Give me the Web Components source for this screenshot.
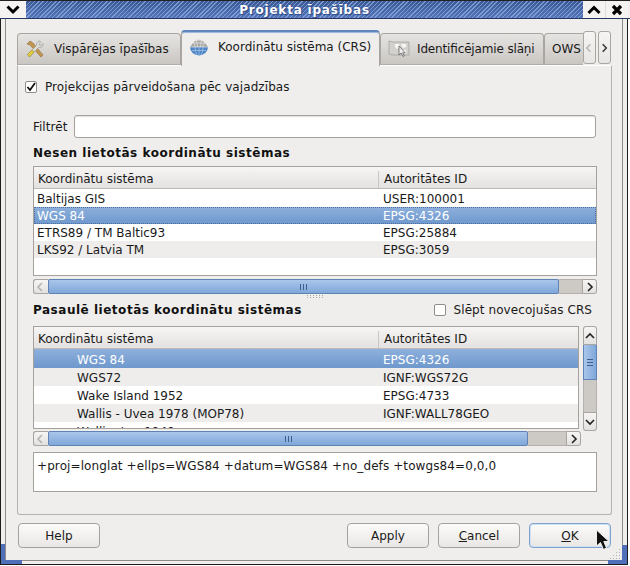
<!DOCTYPE html>
<html>
<head>
<meta charset="utf-8">
<title>Projekta īpašības</title>
<style>
  html, body { margin: 0; padding: 0; background: #fff; }
  body { font-family: "DejaVu Sans", sans-serif; font-size: 12px; color: #1a1a1a; overflow: hidden; }
</style>
</head>
<body>
<props-window>
  <win-titlebar slot="title">Projekta īpašības</win-titlebar>
  <tab-bar slot="tabs">
    <tab-item>
      <svg slot="icon" width="20" height="20" viewBox="0 0 20 20">
        <path d="M5 2 L8 4 L18 16 L16 18 L5 6 L2 5 Z" fill="#c39650" stroke="#8a6a38" stroke-width=".6"/>
        <path d="M15 2 a3.5 3.5 0 0 0 -3.5 4.5 L2.5 15.5 L4.5 18 L13.5 8.5 a3.5 3.5 0 0 0 4.5 -4 L16 6.5 L14 5.5 L15.5 3 Z" fill="#dcdcd8" stroke="#94948e" stroke-width=".6"/>
        <path d="M2.5 15.5 L7 11 L9 13 L4.5 18 Z" fill="#e6cf3f" stroke="#9b8a20" stroke-width=".6"/>
      </svg>
      Vispārējas īpašības
    </tab-item>
    <tab-item active>
      <svg slot="icon" width="20" height="20" viewBox="0 0 20 20">
        <path d="M1 10 a9 8.5 0 0 0 18 0 Z" fill="#4f86c6"/>
        <path d="M2 8.5 Q10 -3 18 8.5 L19 10 L1 10 Z" fill="#a5a5a2"/>
        <path d="M1 10 H19 M4 4.5 L6.5 10 M7.5 2 L8.5 10 M12.5 2 L11.5 10 M16 4.5 L13.5 10 M4 6 H16 M6.5 3.2 H13.5" stroke="#e8e8e6" stroke-width=".7" fill="none"/>
        <path d="M3 13.5 H17 M6 10 Q6 15 8 18 M14 10 Q14 15 12 18 M10 10 V18.5" stroke="#a9c8ea" stroke-width=".7" fill="none"/>
      </svg>
      Koordinātu sistēma (CRS)
    </tab-item>
    <tab-item style="gap: 7px">
      <svg slot="icon" width="22" height="20" viewBox="0 0 22 20" style="margin-top:-2px">
        <path d="M1 3 L5 4 H21 V17 H5 L1 16 Z" fill="#d2d1ce" stroke="#a3a29e" stroke-width=".8"/>
        <path d="M7 6 H11 L12 9 L9 11 L7 9 Z M13 6 H18 V9 L15 10 Z M15 12 H18 V15 H15 Z" fill="#f6f6f4"/>
        <path d="M11 8 L11 17 L13 15 L15 18.5 L16.3 17.8 L14.6 14.8 L17 14.5 Z" fill="#eee" stroke="#555" stroke-width=".7"/>
      </svg>
      <span class="lig" style="font-variant-ligatures: common-ligatures; font-feature-settings: 'liga' 1; text-rendering: optimizeLegibility; letter-spacing: -0.15px">Identificējamie slāņi</span>
    </tab-item>
    <tab-item clipped>OWS</tab-item>
  </tab-bar>

  <check-row style="margin: 14px 0 0 -8px">Projekcijas pārveidošana pēc vajadzības</check-row>
  <filter-row style="margin-top: 21px">Filtrēt</filter-row>
  <sect-head style="margin-top: 8px; margin-bottom: -1px">Nesen lietotās koordinātu sistēmas</sect-head>
  <crs-table style="margin-top: 7px; height: 110px">
    <crs-row h="18" style="padding-top: 2px">Baltijas GIS<span slot="id">USER:100001</span></crs-row>
    <crs-row h="17" selected dotted>WGS 84<span slot="id">EPSG:4326</span></crs-row>
    <crs-row h="17">ETRS89 / TM Baltic93<span slot="id">EPSG:25884</span></crs-row>
    <crs-row h="17" alt>LKS92 / Latvia TM<span slot="id">EPSG:3059</span></crs-row>
  </crs-table>
  <h-scroll style="margin-top: 3px" thumb="511" rest="23"></h-scroll>
  <split-grip></split-grip>
  <div style="display:flex; justify-content:space-between; align-items:center; height:20px">
    <sect-head>Pasaulē lietotās koordinātu sistēmas</sect-head>
    <check-row plain style="margin-right: 5px">Slēpt novecojušas CRS</check-row>
  </div>
  <div style="display:flex; gap:4px; margin-top:6px; align-items:flex-start">
    <crs-table style="flex:1; height:103px">
      <crs-row h="19" selected indent>WGS 84<span slot="id">EPSG:4326</span></crs-row>
      <crs-row h="18" alt indent>WGS72<span slot="id">IGNF:WGS72G</span></crs-row>
      <crs-row h="18" indent>Wake Island 1952<span slot="id">EPSG:4733</span></crs-row>
      <crs-row h="18" alt indent>Wallis - Uvea 1978 (MOP78)<span slot="id">IGNF:WALL78GEO</span></crs-row>
      <crs-row h="18" indent>Wellington 1949</crs-row>
    </crs-table>
    <v-scroll></v-scroll>
  </div>
  <h-scroll style="margin-right:16px" thumb="480" rest="38"></h-scroll>
  <proj-box style="margin-top:6px">+proj=longlat +ellps=WGS84 +datum=WGS84 +no_defs +towgs84=0,0,0</proj-box>

  <dlg-button slot="left">Help</dlg-button>
  <dlg-button slot="right">Apply</dlg-button>
  <dlg-button slot="right"><u>C</u>ancel</dlg-button>
  <dlg-button slot="right" focused><u>O</u>K</dlg-button>
</props-window>

<script>
const CHEV = (d) => {
  const paths = { left: "M7 2 L3 6 L7 10", right: "M4 2 L8 6 L4 10", up: "M2 8 L6 4 L10 8", down: "M2 4 L6 8 L10 4" };
  return `<svg width="12" height="12" viewBox="0 0 12 12"><path d="${paths[d]}" fill="none" stroke="currentColor" stroke-width="1.6"/></svg>`;
};

class PropsWindow extends HTMLElement {
  connectedCallback() {
    this.attachShadow({ mode: "open" });
    this.shadowRoot.innerHTML = `
      <style>
        :host { display: block; position: relative; width: 630px; height: 566px; overflow: hidden; }
        .outer {
          box-sizing: border-box; width: 628px; height: 565px;
          border: solid #1c1c1c; border-width: 0 1px 1px 1px;
          background: #efeeed; display: flex; flex-direction: column;
        }
        .frame {
          box-sizing: border-box; flex: 1; margin: 0 4px 3px 4px;
          border: solid #8f8d89; border-width: 0 1px 1px 1px;
          padding: 11px 10px 0 11px;
          display: flex; flex-direction: column;
        }
        .pane {
          box-sizing: border-box; height: 450px;
          border: 1px solid #b6b3ae; border-top-color: #fff; border-radius: 0 0 3px 3px;
          padding: 0 14px 0 15px; display: flex; flex-direction: column;
        }
        .buttons { display: flex; justify-content: space-between; margin-top: 8px; padding: 0 1px 0 1px; }
        .right { display: flex; gap: 9px; }
        .corner { position: absolute; background: #4f6fb8; }
        .cursor { position: absolute; left: 595px; top: 529px; }
        .grip { position: absolute; left: 610px; top: 549px; }
      </style>
      <div class="outer">
        <slot name="title"></slot>
        <div class="frame">
          <slot name="tabs"></slot>
          <div class="pane"><slot></slot></div>
          <div class="buttons">
            <slot name="left"></slot>
            <div class="right"><slot name="right"></slot></div>
          </div>
        </div>
      </div>
      <!-- resize corners -->
      <div class="corner" style="left:1px; top:544px; width:4px; height:20px"></div>
      <div class="corner" style="left:1px; top:560px; width:21px; height:4px"></div>
      <div class="corner" style="left:622px; top:545px; width:5px; height:19px"></div>
      <div class="corner" style="left:608px; top:560px; width:19px; height:4px"></div>
      <svg class="grip" width="12" height="11" viewBox="0 0 12 11" fill="#b5b3ae">
        <rect x="9" y="0" width="1" height="1"/><rect x="6" y="3" width="1" height="1"/><rect x="9" y="3" width="1" height="1"/>
        <rect x="3" y="6" width="1" height="1"/><rect x="6" y="6" width="1" height="1"/><rect x="9" y="6" width="1" height="1"/>
        <rect x="0" y="9" width="1" height="1"/><rect x="3" y="9" width="1" height="1"/><rect x="6" y="9" width="1" height="1"/><rect x="9" y="9" width="1" height="1"/>
      </svg>
      <svg class="cursor" width="17" height="22" viewBox="0 0 17 22">
        <path d="M1.5 1 V17 L5.5 13.5 L8.5 20.5 L11.5 19 L8.8 12.5 L14 12.5 Z" fill="#111" stroke="#eee" stroke-width="1"/>
      </svg>
    `;
  }
}

class WinTitlebar extends HTMLElement {
  connectedCallback() {
    this.attachShadow({ mode: "open" });
    this.shadowRoot.innerHTML = `
      <style>
        :host { display: flex; height: 19px; box-sizing: border-box; border-top: 1px solid #222; border-bottom: 1px solid #26385f; background: #efeeed; margin: 0 -1px 0 -1px; width: 630px; }
        .btn { display: flex; align-items: center; justify-content: center; background: #f4f3f2; }
        .bar {
          flex: 1; display: flex; align-items: center; justify-content: center;
          background:
            repeating-linear-gradient(135deg, rgba(140,170,225,.75) 0 1px, rgba(60,90,160,.2) 1px 3px),
            linear-gradient(#39578f, #5a7cc0);
          color: #fff; font: bold 12px "DejaVu Sans", sans-serif; letter-spacing: 0.8px;
        }
        .bar span { padding: 0 4px; text-shadow: 0 0 2px #2c4a88, 1px 1px 1px #2c4a88; }
      </style>
      <div class="btn" style="width:26px">
        <svg width="14" height="10" viewBox="0 0 14 10"><path d="M1.5 1.5 L7 7 L12.5 1.5" fill="none" stroke="#000" stroke-width="3"/></svg>
      </div>
      <div class="bar"><span><slot></slot></span></div>
      <div class="btn" style="width:22px">
        <svg width="14" height="10" viewBox="0 0 14 10"><path d="M1.5 8 L7 2.5 L12.5 8" fill="none" stroke="#000" stroke-width="3"/></svg>
      </div>
      <div class="btn" style="width:23px; margin-right:2px; border-left:1px solid #ddd; box-sizing:border-box">
        <svg width="12" height="12" viewBox="0 0 12 12"><path d="M2 2 L10 10 M10 2 L2 10" fill="none" stroke="#000" stroke-width="3.2"/></svg>
      </div>
    `;
  }
}

class TabBar extends HTMLElement {
  connectedCallback() {
    this.attachShadow({ mode: "open" });
    this.shadowRoot.innerHTML = `
      <style>
        :host { display: flex; position: relative; height: 35px; align-items: flex-end; width: 595px; }
        .arrows { position: absolute; left: 566px; top: 1px; display: flex; gap: 2px; z-index: 2; }
        .arrows div {
          box-sizing: border-box; width: 13px; height: 33px; display: flex; align-items: center; justify-content: center;
          border: 1px solid #a9a6a1; border-radius: 3px; background: linear-gradient(#f6f5f4, #e8e6e4);
        }
        svg { display: block; }
      </style>
      <slot></slot>
      <div class="arrows">
        <div style="color:#b5b3af">${CHEV("left")}</div>
        <div style="color:#333">${CHEV("right")}</div>
      </div>
    `;
  }
}

class TabItem extends HTMLElement {
  connectedCallback() {
    this.attachShadow({ mode: "open" });
    const active = this.hasAttribute("active");
    const clipped = this.hasAttribute("clipped");
    const w = active ? 199 : clipped ? 39 : 164;
    this.shadowRoot.innerHTML = `
      <style>
        :host {
          display: flex; box-sizing: border-box; align-items: center; gap: 9px;
          width: ${w}px; height: ${active ? 35 : 32}px; overflow: hidden; white-space: nowrap;
          padding: ${active ? "0 0 5px 7px" : "0 0 1px 7px"};
          border: 1px solid #a9a6a1; border-bottom: 0;
          border-radius: 4px 4px 0 0;
          background: ${active ? "#efeeed" : "linear-gradient(#e6e4e2, #c9c6c2)"};
          ${active ? "border-top: 2px solid #5f86bd; box-shadow: inset 0 1px 0 #9ab9e0;" : ""}
          ${active ? "position: relative; z-index: 1; margin-bottom: -1px; height: 36px;" : "border-bottom: 1px solid #b0ada8;"}
          ${clipped ? "border-right: 0; border-radius: 4px 0 0 0;" : ""}
        }
        ::slotted(svg) { flex: none; }
      </style>
      <slot name="icon"></slot><slot></slot>
    `;
  }
}

class CheckRow extends HTMLElement {
  connectedCallback() {
    this.attachShadow({ mode: "open" });
    const plain = this.hasAttribute("plain");
    this.shadowRoot.innerHTML = `
      <style>
        :host { display: flex; align-items: center; gap: 8px; height: 14px; letter-spacing: 0.08px; }
        .box {
          box-sizing: border-box; width: 12px; height: 12px; margin-left: 0;
          border: 1px solid #8f8c87; border-radius: 2px; background: #fff;
          display: flex; align-items: center; justify-content: center;
        }
      </style>
      <div class="box">${plain ? "" : `<svg width="10" height="10" viewBox="0 0 10 10"><path d="M1.5 5 L4 8 L9 1" fill="none" stroke="#111" stroke-width="1.8"/></svg>`}</div>
      <span><slot></slot></span>
    `;
  }
}

class FilterRow extends HTMLElement {
  connectedCallback() {
    this.attachShadow({ mode: "open" });
    this.shadowRoot.innerHTML = `
      <style>
        :host { display: flex; align-items: center; height: 23px; }
        .lbl { width: 41px; }
        .inp { flex: 1; margin-right: 1px; box-sizing: border-box; height: 23px; background: #fff; border: 1px solid #a5a29d; border-radius: 3px; box-shadow: inset 0 1px 1px #e4e2df; }
      </style>
      <span class="lbl"><slot></slot></span><div class="inp"></div>
    `;
  }
}

class SectHead extends HTMLElement {
  connectedCallback() {
    this.attachShadow({ mode: "open" });
    this.shadowRoot.innerHTML = `
      <style>
        :host { display: block; height: 14px; line-height: 14px; font-weight: bold; letter-spacing: 0.52px; color: #111; white-space: nowrap; }
      </style>
      <slot></slot>
    `;
  }
}

class CrsTable extends HTMLElement {
  connectedCallback() {
    this.attachShadow({ mode: "open" });
    this.shadowRoot.innerHTML = `
      <style>
        :host { display: block; box-sizing: border-box; border: 1px solid #a5a29d; background: #fff; overflow: hidden; }
        .head {
          display: grid; grid-template-columns: 344px 1fr; height: 22px; box-sizing: border-box; padding-top: 3px;
          background: linear-gradient(#f6f5f4, #e4e2e0); border-bottom: 1px solid #bdbab5;
          align-items: center;
        }
        .head span { padding-left: 4px; line-height: 17px; }
        .head span + span { border-left: 1px solid #c9c6c2; padding-left: 5px; }
      </style>
      <div class="head"><span>Koordinātu sistēma</span><span>Autoritātes ID</span></div>
      <slot></slot>
    `;
  }
}

class CrsRow extends HTMLElement {
  connectedCallback() {
    this.attachShadow({ mode: "open" });
    const h = this.getAttribute("h") || 17;
    const sel = this.hasAttribute("selected");
    const alt = this.hasAttribute("alt");
    const indent = this.hasAttribute("indent");
    const dotted = this.hasAttribute("dotted");
    this.shadowRoot.innerHTML = `
      <style>
        :host {
          display: grid; grid-template-columns: 345px 1fr; align-items: center; box-sizing: border-box;
          height: ${h}px; color: ${sel ? "#fff" : "#1a1a1a"};
          background: ${sel ? "linear-gradient(#8db0dc, #6f98cd)" : alt ? "#eeedec" : "#fff"};
          ${dotted ? "outline: 1px dotted #4e6f9e; outline-offset: -1px;" : ""}
          ${indent ? "padding-top: 2px;" : ""}
          white-space: nowrap;
        }
        .a { padding-left: ${indent ? 43 : 3}px; }
        .b { padding-left: 4px; }
      </style>
      <div class="a"><slot></slot></div><div class="b"><slot name="id"></slot></div>
    `;
  }
}

class HScroll extends HTMLElement {
  connectedCallback() {
    this.attachShadow({ mode: "open" });
    const thumb = this.getAttribute("thumb");
    const rest = this.getAttribute("rest");
    this.shadowRoot.innerHTML = `
      <style>
        :host { display: flex; height: 15px; box-sizing: border-box; background: #cdcac6; border-radius: 3px; }
        .end {
          box-sizing: border-box; width: 15px; flex: none; display: flex; align-items: center; justify-content: center;
          border: 1px solid #a9a6a1; background: linear-gradient(#f6f5f4, #e4e2e0);
        }
        .thumb {
          box-sizing: border-box; width: ${thumb}px; display: flex; align-items: center; justify-content: center;
          background: linear-gradient(#aac6ea, #7fa7d9); border: 1px solid #5f83b5; border-radius: 2px;
          color: #4c6f9f;
        }
        .rest { width: ${rest}px; flex: 1; border: solid #b5b2ad; border-width: 1px 0; box-sizing: border-box; }
        .ln { width: 7px; height: 6px; background: repeating-linear-gradient(90deg, #3f5f8f 0 1px, transparent 1px 3px); }
      </style>
      <div class="end" style="color:#b5b3af; border-radius:3px 0 0 3px; border-right:0">${CHEV("left")}</div>
      <div class="thumb"><div class="ln"></div></div>
      <div class="rest"></div>
      <div class="end" style="color:#222; border-radius:0 3px 3px 0">${CHEV("right")}</div>
    `;
  }
}

class VScroll extends HTMLElement {
  connectedCallback() {
    this.attachShadow({ mode: "open" });
    this.shadowRoot.innerHTML = `
      <style>
        :host { display: flex; flex-direction: column; flex: none; width: 14px; height: 105px; box-sizing: border-box; background: #cdcac6; border-radius: 3px; }
        .end {
          box-sizing: border-box; height: 19px; flex: none; display: flex; align-items: center; justify-content: center;
          border: 1px solid #a9a6a1; background: linear-gradient(#f6f5f4, #e4e2e0); color: #222;
        }
        .thumb {
          box-sizing: border-box; height: 35px; display: flex; align-items: center; justify-content: center;
          background: linear-gradient(90deg, #aac6ea, #7fa7d9); border: 1px solid #5f83b5; border-top: 0;
        }
        .rest { flex: 1; border: solid #b5b2ad; border-width: 0 1px; }
        .ln { width: 6px; height: 7px; background: repeating-linear-gradient(#3f5f8f 0 1px, transparent 1px 3px); }
      </style>
      <div class="end" style="border-radius:3px 3px 0 0">${CHEV("up")}</div>
      <div class="thumb"><div class="ln"></div></div>
      <div class="rest"></div>
      <div class="end" style="border-radius:0 0 3px 3px">${CHEV("down")}</div>
    `;
  }
}

class SplitGrip extends HTMLElement {
  connectedCallback() {
    this.attachShadow({ mode: "open" });
    this.shadowRoot.innerHTML = `
      <style>
        :host { display: flex; height: 6px; align-items: center; justify-content: center; }
        div { width: 16px; height: 4px; background: radial-gradient(circle at 0.5px 0.5px, #aaa7a2 0.7px, transparent 0.8px) 0 0 / 3px 2px; }
      </style>
      <div></div>
    `;
  }
}

class ProjBox extends HTMLElement {
  connectedCallback() {
    this.attachShadow({ mode: "open" });
    this.shadowRoot.innerHTML = `
      <style>
        :host { display: block; box-sizing: border-box; height: 40px; border: 1px solid #a5a29d; background: #fff; padding: 5px 3px; line-height: 16px; letter-spacing: 0.1px; white-space: nowrap; }
      </style>
      <slot></slot>
    `;
  }
}

class DlgButton extends HTMLElement {
  connectedCallback() {
    this.attachShadow({ mode: "open" });
    const focused = this.hasAttribute("focused");
    this.shadowRoot.innerHTML = `
      <style>
        :host {
          display: flex; box-sizing: border-box; width: 82px; height: 25px; align-items: center; justify-content: center;
          border: 1px solid ${focused ? "#7fa3cf" : "#a5a29d"}; border-radius: 4px;
          background: linear-gradient(#fbfbfa, #e9e7e5);
          ${focused ? "box-shadow: inset 0 0 0 1px #cfe0f3;" : ""}
        }
      </style>
      <span><slot></slot></span>
    `;
  }
}

customElements.define("props-window", PropsWindow);
customElements.define("win-titlebar", WinTitlebar);
customElements.define("tab-bar", TabBar);
customElements.define("tab-item", TabItem);
customElements.define("check-row", CheckRow);
customElements.define("filter-row", FilterRow);
customElements.define("sect-head", SectHead);
customElements.define("crs-table", CrsTable);
customElements.define("crs-row", CrsRow);
customElements.define("h-scroll", HScroll);
customElements.define("v-scroll", VScroll);
customElements.define("split-grip", SplitGrip);
customElements.define("proj-box", ProjBox);
customElements.define("dlg-button", DlgButton);
</script>
</body>
</html>
